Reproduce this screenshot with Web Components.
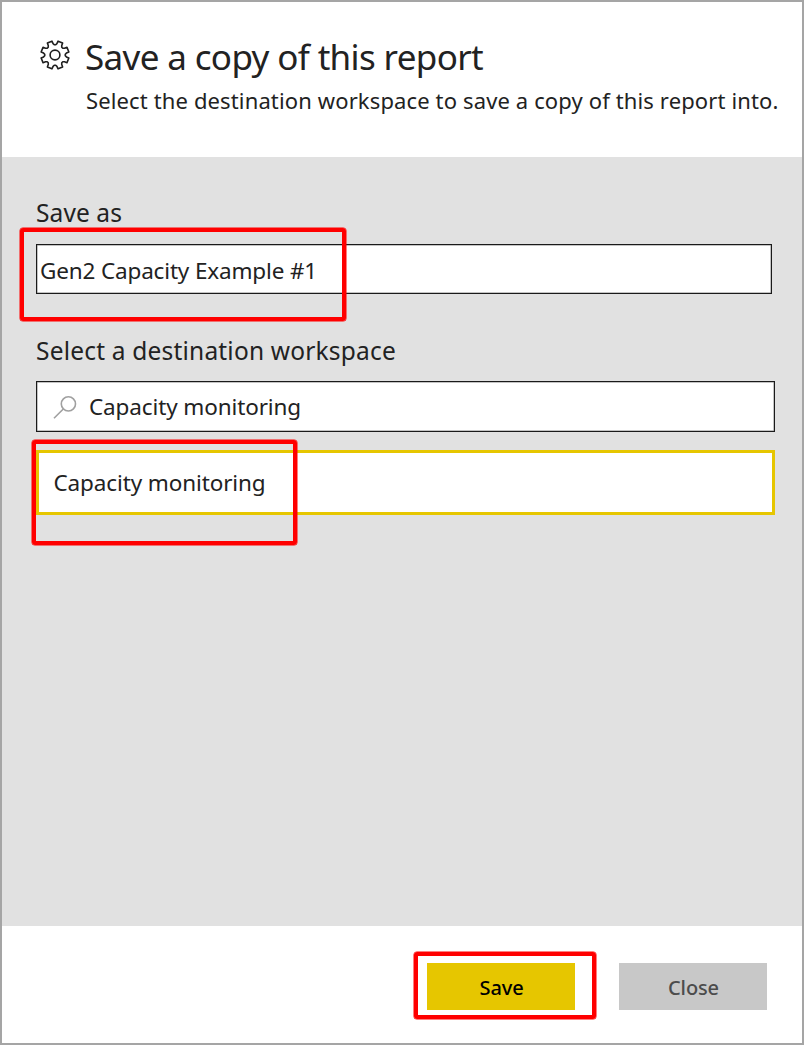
<!DOCTYPE html>
<html lang="en">
<head>
<meta charset="utf-8">
<title>Save a copy of this report</title>
<style>
html,body{margin:0;height:100%}
body{font-family:"Noto Sans","Open Sans",sans-serif;color:#222;background:#fff;overflow:hidden}
</style>
</head>
<body>
<save-dialog></save-dialog>
<script>
const define = (name, html, setup) => {
  const t = document.createElement('template');
  t.innerHTML = html;
  customElements.define(name, class extends HTMLElement {
    connectedCallback() {
      if (this.shadowRoot) return;
      this.attachShadow({mode: 'open'}).append(t.content.cloneNode(true));
      if (setup) setup(this);
    }
  });
};

/* A line of text whose tracking is set so that it spans the given measure. */
define('fit-text', `<style>
:host{display:block;white-space:pre}
span{display:inline-block}
</style><span><slot></slot></span>`, el => {
  const span = el.shadowRoot.querySelector('span');
  const n = el.textContent.length;
  const w = span.getBoundingClientRect().width;
  span.style.letterSpacing = ((+el.getAttribute('measure') - w) / n).toFixed(3) + 'px';
});

define('gear-icon', `<style>
:host{display:block;width:32px;height:32px}
svg{display:block}
</style><svg width="32" height="32" viewBox="-16 -16 32 32" fill="none" stroke="#1f1f1f" stroke-width="1.6" stroke-linejoin="round"><path/><circle r="4.9"/></svg>`, el => {
  const pts = [];
  for (let i = 0; i < 8; i++) {
    const a = 22.5 + i * 45;
    for (const [d, r] of [[-18.5, 10.3], [-13, 11.6], [-10, 14.2], [10, 14.2], [13, 11.6], [18.5, 10.3]]) {
      const q = (a + d) * Math.PI / 180;
      pts.push((r * Math.cos(q)).toFixed(2) + ' ' + (r * Math.sin(q)).toFixed(2));
    }
  }
  el.shadowRoot.querySelector('path').setAttribute('d', 'M' + pts.join('L') + 'Z');
});

define('search-icon', `<style>
:host{display:block;width:24px;height:24px}
svg{display:block}
</style><svg width="24" height="24" viewBox="0 0 24 24" fill="none" stroke="#a0a0a0" stroke-width="1.6"><circle cx="15.4" cy="8.9" r="7.1"/><path d="M10.3 14 1 23.3"/></svg>`);

/* Red frame laid over the control it calls out. */
define('callout-frame', `<style>
:host{display:block;position:absolute;box-sizing:border-box;border:4px solid #f00;border-radius:3px;box-shadow:0 0 0 .5px #f00;pointer-events:none;z-index:1}
</style>`);

define('text-field', `<style>
:host{display:flex;align-items:center;box-sizing:border-box;position:relative;height:50px;background:#fff;border:1px solid #1a1a1a;box-shadow:inset 0 0 0 .5px #888;font-size:22.5px;line-height:32px}
</style><slot></slot>`);

define('workspace-option', `<style>
:host{display:flex;align-items:center;box-sizing:border-box;position:relative;height:65px;background:#fff;border:3px solid #e6c600;font-size:22.5px;line-height:32px;padding-left:14.5px}
</style><slot></slot>`);

define('dialog-button', `<style>
:host{display:flex;align-items:center;justify-content:center;box-sizing:border-box;position:relative;width:148px;height:47px;padding:2px 0 0 1px;background:#c8c8c8;color:#4c4c4c;font-size:20px;line-height:28px;font-weight:500}
:host([primary]){background:#e6c600;color:#000}
</style><slot></slot>`);

define('dialog-header', `<style>
:host{display:flex;box-sizing:border-box;height:155px;padding:30px 0 0 37px;gap:14px}
gear-icon{margin-top:7px}
h1,p{margin:0;font-weight:400}
h1{font-size:35px;line-height:48px;padding-top:1px}
p{font-size:22px;line-height:30px;margin:4px 0 0 1px}
</style><gear-icon></gear-icon><div>
<h1><fit-text measure="398">Save a copy of this report</fit-text></h1>
<p><fit-text measure="692.5">Select the destination workspace to save a copy of this report into.</fit-text></p></div>`);

define('dialog-body', `<style>
:host{display:block;box-sizing:border-box;height:769px;background:#e1e1e1;padding:38px 27px 0 34px}
label{display:block;font-size:24.5px;line-height:36px}
text-field{margin-top:12px}
.name{margin:13px 3px 0 0;padding:3px 0 0 3px}
.second{margin-top:39px}
.search{height:51px;padding-left:16px;gap:12px}
.search fit-text{padding-top:1px}
workspace-option{margin-top:18px}
.name callout-frame{left:-17px;top:-17px;width:326px;height:93px}
workspace-option callout-frame{left:-7px;top:-13px;width:265px;height:105px}
</style>
<label><fit-text measure="86">Save as</fit-text></label>
<text-field class="name"><fit-text measure="277">Gen2 Capacity Example #1</fit-text><callout-frame></callout-frame></text-field>
<label class="second"><fit-text measure="360">Select a destination workspace</fit-text></label>
<text-field class="search"><search-icon></search-icon><fit-text measure="212">Capacity monitoring</fit-text></text-field>
<workspace-option><fit-text measure="212">Capacity monitoring</fit-text><callout-frame></callout-frame></workspace-option>`);

define('dialog-footer', `<style>
:host{display:flex;justify-content:flex-end;box-sizing:border-box;padding:37px 35px 0 0;gap:44px}
callout-frame{left:-13px;top:-11px;width:182px;height:67px}
</style>
<dialog-button primary><fit-text measure="44">Save</fit-text><callout-frame></callout-frame></dialog-button>
<dialog-button><fit-text measure="51">Close</fit-text></dialog-button>`);

define('save-dialog', `<style>
:host{display:flex;flex-direction:column;box-sizing:border-box;width:804px;height:1045px;border:2px solid #a5a5a5;background:#fff}
</style><dialog-header></dialog-header><dialog-body></dialog-body><dialog-footer></dialog-footer>`);
</script>
</body>
</html>
